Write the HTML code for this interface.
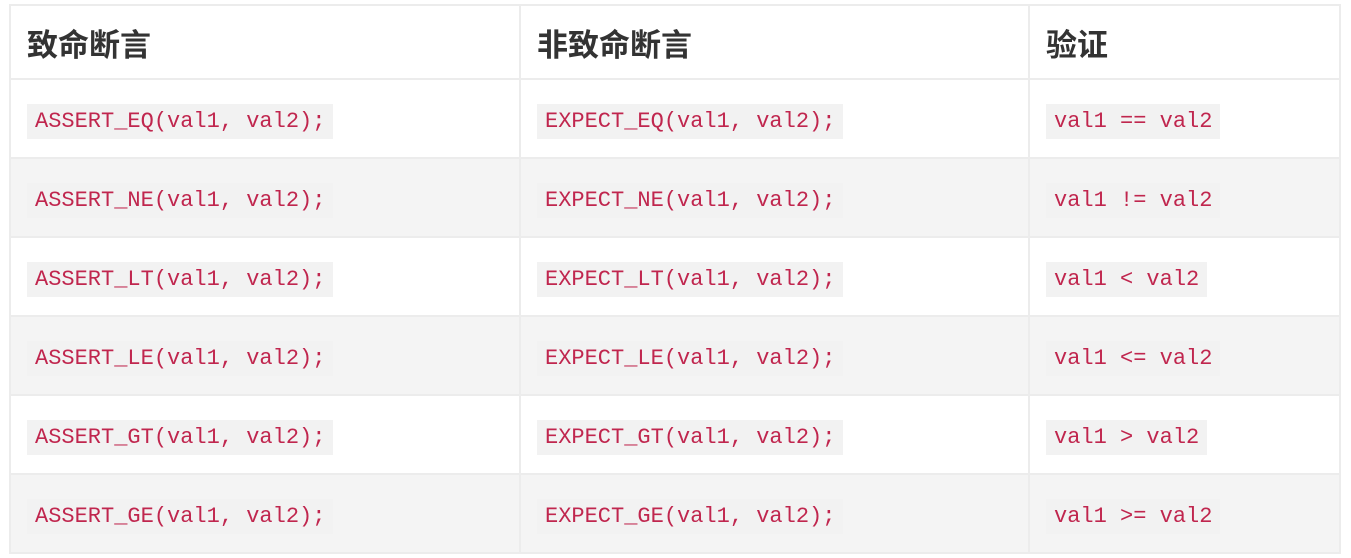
<!DOCTYPE html>
<html><head><meta charset="utf-8"><style>
body{margin:0;background:#fff;width:1351px;height:558px;overflow:hidden}
table{position:absolute;left:9px;top:4px;border-collapse:collapse;width:1332px}
td,th{border:2px solid #ececec;padding:0 0 0 16px;text-align:left;box-sizing:border-box}
td{padding-top:5px}
th{font:bold 31px "Liberation Sans","Noto Sans CJK SC",sans-serif;color:#333}
tr{height:79px}
tr:nth-child(odd) td{background:#f4f4f4}
code{font:22px "Liberation Mono",monospace;color:#c0264e;background:#f2f2f2;padding:6px 8px;display:inline-block;line-height:23px}
</style></head><body>
<table>
<tr style="height:74px"><th style="width:510px">致命断言</th><th style="width:509px">非致命断言</th><th>验证</th></tr>
<tr><td><code>ASSERT_EQ(val1, val2);</code></td><td><code>EXPECT_EQ(val1, val2);</code></td><td><code>val1 == val2</code></td></tr>
<tr><td><code>ASSERT_NE(val1, val2);</code></td><td><code>EXPECT_NE(val1, val2);</code></td><td><code>val1 != val2</code></td></tr>
<tr><td><code>ASSERT_LT(val1, val2);</code></td><td><code>EXPECT_LT(val1, val2);</code></td><td><code>val1 &lt; val2</code></td></tr>
<tr><td><code>ASSERT_LE(val1, val2);</code></td><td><code>EXPECT_LE(val1, val2);</code></td><td><code>val1 &lt;= val2</code></td></tr>
<tr><td><code>ASSERT_GT(val1, val2);</code></td><td><code>EXPECT_GT(val1, val2);</code></td><td><code>val1 &gt; val2</code></td></tr>
<tr><td><code>ASSERT_GE(val1, val2);</code></td><td><code>EXPECT_GE(val1, val2);</code></td><td><code>val1 &gt;= val2</code></td></tr>
</table>
</body></html>
